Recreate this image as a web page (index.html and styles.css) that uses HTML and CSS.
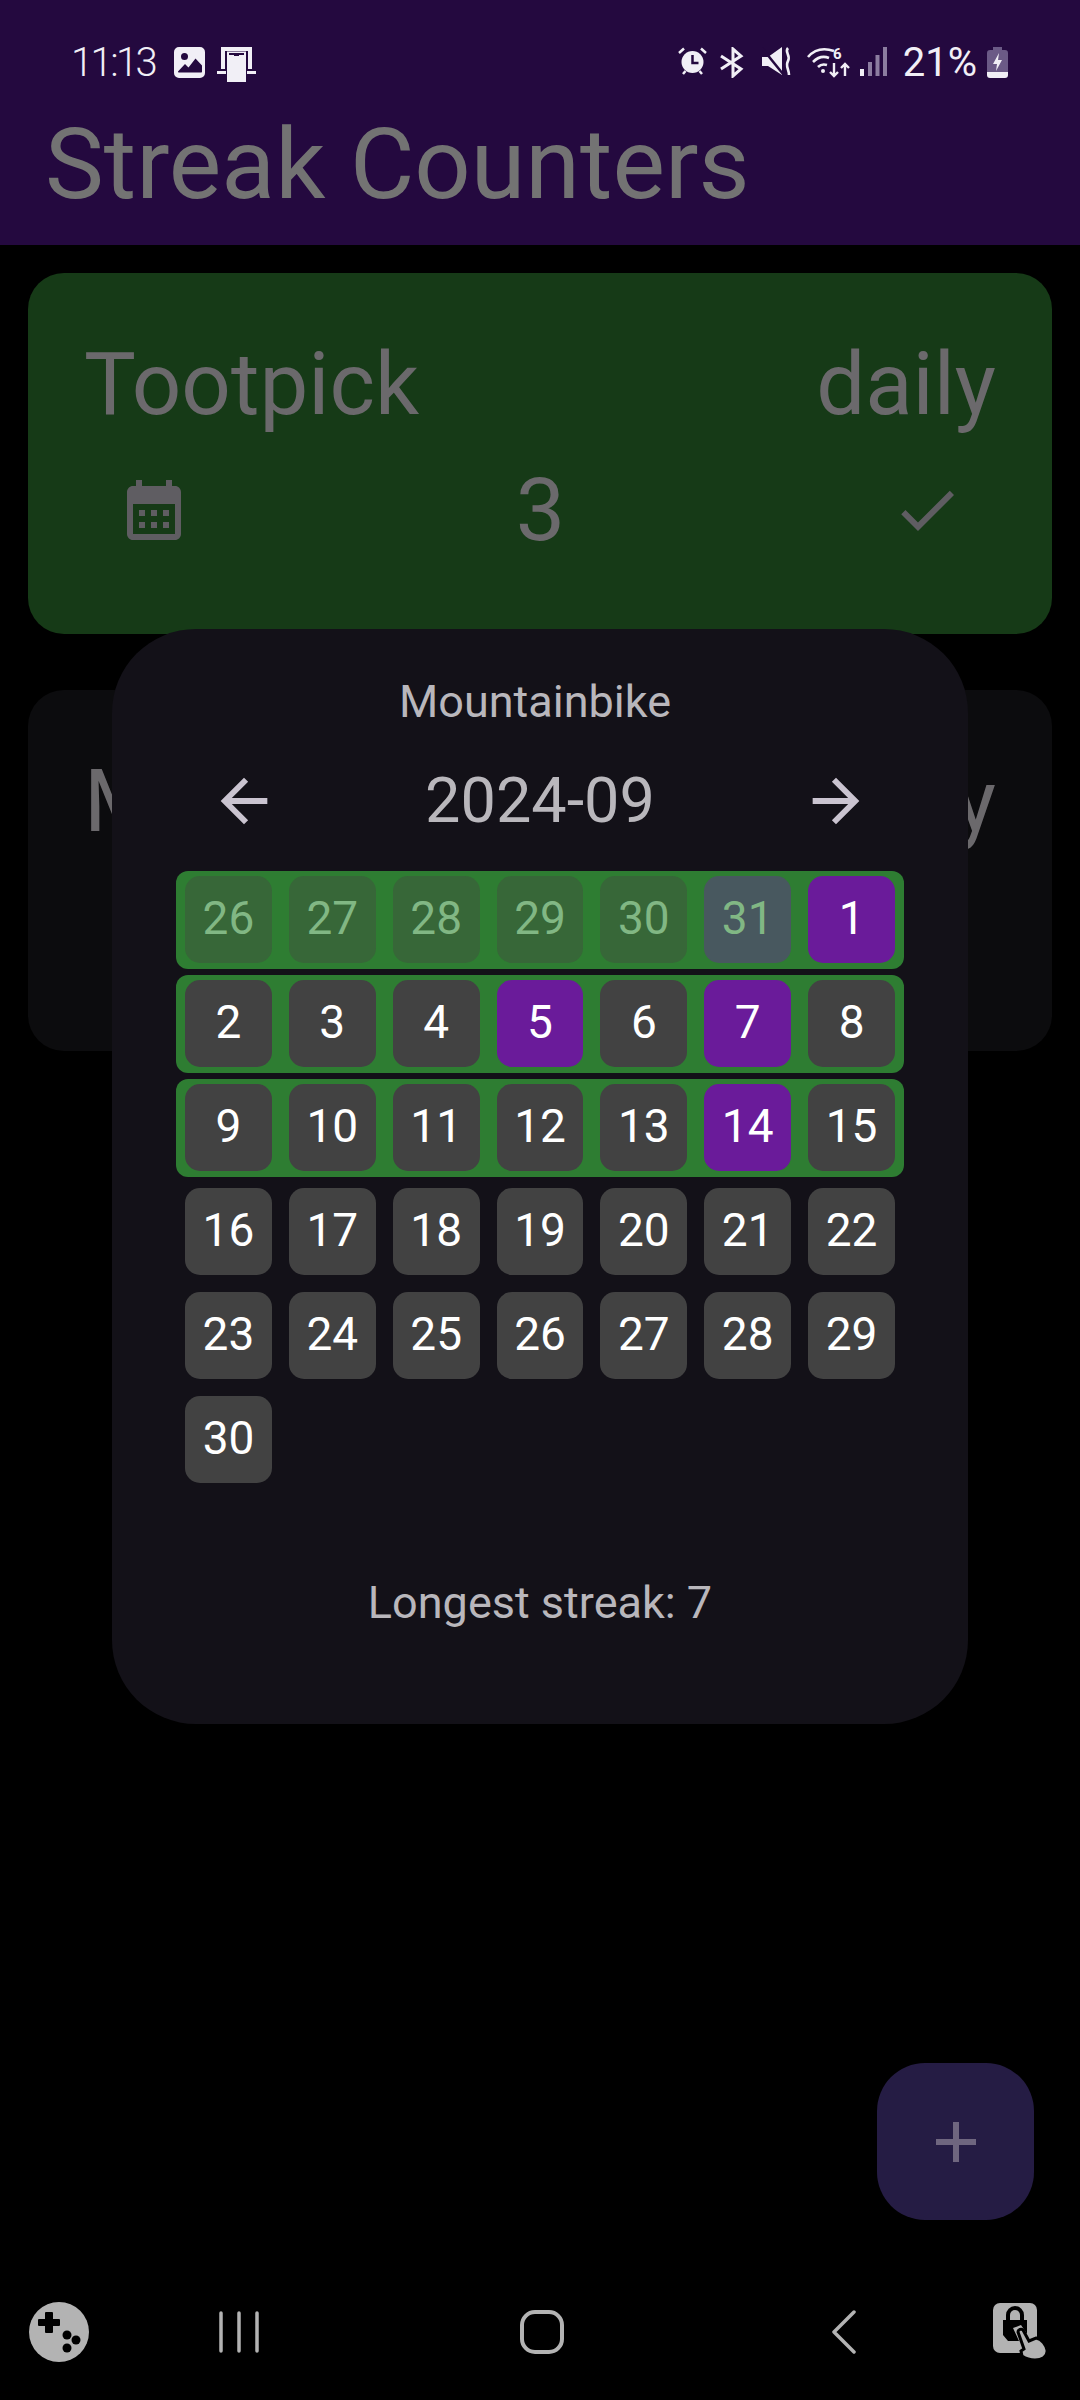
FILE: index.html
```html
<!DOCTYPE html>
<html lang="en">
<head>
    <meta charset="UTF-8">
    <meta name="viewport" content="width=device-width, initial-scale=1.0">
    <title>Streak Counters</title>
    <link rel="stylesheet" href="styles.css">
</head>
<body>
    <header class="app-header">
        <div class="status-bar">
            <div class="status-left">
                <span class="status-time">11:13</span>
                <svg class="icon-image" viewBox="0 0 31 31"><path fill="#f1eff6" fill-rule="evenodd" d="M5 0h21a5 5 0 0 1 5 5v21a5 5 0 0 1-5 5H5a5 5 0 0 1-5-5V5a5 5 0 0 1 5-5zM10.500 6a3.500 3.500 0 1 0 0 7 3.500 3.500 0 0 0 0-7zM4 25.500h23c.8 0 1-.6 1-1v-6l-6.500-7-7 9-3.500-3.500-7 7.500c0 .6.400 1 1 1z"/></svg>
                <svg class="icon-device" viewBox="0 0 39 35"><path fill="#f1eff6" d="M4 0h31v22h-4V4H8v18H4z"/><path fill="#f1eff6" d="M0 24h9v3H0zM30 24h9v3h-9z"/><path fill="#f1eff6" d="M10 4.500h19V35H10z"/><path fill="#24093f" d="M12 6h15v2H12zM17 7h5v2h-5z"/></svg>
            </div>
            <div class="status-right">
                <svg class="icon-alarm" viewBox="0 0 29 28"><circle cx="14.500" cy="15" r="11" fill="#f1eff6"/><path fill="none" stroke="#f1eff6" stroke-width="2.500" d="M1 6l5-4.500M28 6l-5-4.500M5 27l2.500-3M24 27l-2.500-3"/><path fill="none" stroke="#24093f" stroke-width="2.500" d="M14.500 8v8h6"/></svg>
                <svg class="icon-bt" viewBox="0 0 28 31"><path fill="none" stroke="#f1eff6" stroke-width="3" d="M2 9l20 13-8 7V2l8 7L2 22"/></svg>
                <svg class="icon-mute" viewBox="0 0 30 29"><path fill="#f1eff6" d="M0 10h6L20 0v28L6 19H0z"/><path fill="none" stroke="#24093f" stroke-width="2.500" d="M0 1l21 26"/><path fill="none" stroke="#f1eff6" stroke-width="2.600" d="M26 1c-4 4 3 7 0 13-3 5 1 8 1 14"/></svg>
                <svg class="icon-wifi" viewBox="0 -4 43 35"><g fill="none" stroke="#f1eff6" stroke-width="2.600"><path d="M1 10C8 2 18 1 27 4"/><path d="M6 15c5-5 11-6 16-4"/><path d="M11 20c3-3 6-3 9-2"/></g><circle cx="16" cy="24" r="2" fill="#f1eff6"/><text class="wifi-six" x="26" y="12">6</text><path fill="none" stroke="#f1eff6" stroke-width="2.400" d="M27 16v13M23 25l4 4 4-4M38 29V17M34 21l4-4 4 4"/></svg>
                <svg class="icon-signal" viewBox="0 0 27 29"><path fill="#f1eff6" d="M0 22h4v7H0z"/><path fill="#8c7da0" d="M8 15h4v14H8zM15.500 8h4v21h-4zM23 0h4v29h-4z"/></svg>
                <span class="status-battery">21%</span>
                <svg class="icon-battery" viewBox="0 0 21 31"><path fill="#6b5a86" d="M6 0h9v3h3a3 3 0 0 1 3 3v19H0V6a3 3 0 0 1 3-3h3z"/><path fill="#f1eff6" d="M0 25h21v3a3 3 0 0 1-3 3H3a3 3 0 0 1-3-3z"/><path fill="#f1eff6" d="M12 6l-6 11h4l-1 7 6-11h-4z"/></svg>
            </div>
        </div>
        <h1 class="app-title">Streak Counters</h1>
    </header>

    <main class="counter-list">
        <section class="counter-card card-done">
            <div class="card-top">
                <span>Tootpick</span>
                <span>daily</span>
            </div>
            <div class="card-bottom">
                <svg class="card-icon" viewBox="0 0 24 24"><path d="M19 4h-1V2h-2v2H8V2H6v2H5c-1.100 0-2 .9-2 2v14c0 1.100.9 2 2 2h14c1.100 0 2-.9 2-2V6c0-1.100-.9-2-2-2zm0 16H5V10h14v10zM9 14H7v-2h2v2zm4 0h-2v-2h2v2zm4 0h-2v-2h2v2zm-8 4H7v-2h2v2zm4 0h-2v-2h2v2zm4 0h-2v-2h2v2z"/></svg>
                <span class="card-count">3</span>
                <svg class="card-icon" viewBox="0 0 24 24"><path d="M9 16.170L4.830 12l-1.420 1.410L9 19 21 7l-1.410-1.410z"/></svg>
            </div>
        </section>
        <!-- second card sits behind the dialog, only its outer letters show -->
        <section class="counter-card card-open">
            <div class="card-top">
                <span>M</span>
                <span>y</span>
            </div>
        </section>
    </main>

    <div class="calendar-dialog">
        <div class="dialog-name">Mountainbike</div>
        <div class="month-row">
            <svg class="month-arrow" viewBox="0 0 24 24"><path d="M20 11H7.830l5.590-5.590L12 4l-8 8 8 8 1.410-1.410L7.830 13H20v-2z"/></svg>
            <span class="month-label">2024-09</span>
            <svg class="month-arrow" viewBox="0 0 24 24"><path d="M12 4l-1.410 1.410L16.170 11H4v2h12.170l-5.580 5.590L12 20l8-8z"/></svg>
        </div>
        <div class="weeks">
            <div class="week week-streak">
                <div class="day day-outside">26</div>
                <div class="day day-outside">27</div>
                <div class="day day-outside">28</div>
                <div class="day day-outside">29</div>
                <div class="day day-outside">30</div>
                <div class="day day-outside day-last">31</div>
                <div class="day day-done">1</div>
            </div>
            <div class="week week-streak">
                <div class="day">2</div>
                <div class="day">3</div>
                <div class="day">4</div>
                <div class="day day-done">5</div>
                <div class="day">6</div>
                <div class="day day-done">7</div>
                <div class="day">8</div>
            </div>
            <div class="week week-streak">
                <div class="day">9</div>
                <div class="day">10</div>
                <div class="day">11</div>
                <div class="day">12</div>
                <div class="day">13</div>
                <div class="day day-done">14</div>
                <div class="day">15</div>
            </div>
            <div class="week">
                <div class="day">16</div>
                <div class="day">17</div>
                <div class="day">18</div>
                <div class="day">19</div>
                <div class="day">20</div>
                <div class="day">21</div>
                <div class="day">22</div>
            </div>
            <div class="week">
                <div class="day">23</div>
                <div class="day">24</div>
                <div class="day">25</div>
                <div class="day">26</div>
                <div class="day">27</div>
                <div class="day">28</div>
                <div class="day">29</div>
            </div>
            <div class="week">
                <div class="day">30</div>
            </div>
        </div>
        <div class="longest-streak">Longest streak: 7</div>
    </div>

    <button class="add-button" aria-label="Add">
        <svg viewBox="0 0 40 40"><path fill="#6f667f" d="M17 0h6v17h17v6H23v17h-6V23H0v-6h17z"/></svg>
    </button>

    <nav class="nav-bar">
        <svg class="nav-game" viewBox="0 0 60 60"><circle cx="30" cy="30" r="30" fill="#b3b3b3"/><path fill="#000" d="M18 11h6a1 1 0 0 1 1 1v6h6a1 1 0 0 1 1 1v5a1 1 0 0 1-1 1h-6v6a1 1 0 0 1-1 1h-6a1 1 0 0 1-1-1v-6h-6a1 1 0 0 1-1-1v-5a1 1 0 0 1 1-1h6v-6a1 1 0 0 1 1-1z" transform="translate(-1 -1)"/><circle cx="38" cy="33" r="4.500"/><circle cx="47" cy="38" r="4.500"/><circle cx="38" cy="46" r="4.500"/></svg>
        <svg class="nav-recents" viewBox="0 0 40 42"><path fill="none" stroke="#b3b3b3" stroke-width="3.500" stroke-linecap="round" d="M2 2v38M20 2v38M38 2v38"/></svg>
        <svg class="nav-home" viewBox="0 0 44 44"><rect x="2" y="2" width="40" height="40" rx="13" fill="none" stroke="#b3b3b3" stroke-width="4"/></svg>
        <svg class="nav-back" viewBox="0 0 24 44"><path fill="none" stroke="#b3b3b3" stroke-width="3.500" stroke-linecap="round" stroke-linejoin="round" d="M22 2L2 22l20 20"/></svg>
        <svg class="nav-lock" viewBox="0 0 56 58"><rect width="44" height="50" rx="7" fill="#b3b3b3"/><path fill="#000" d="M13 17v-5a9 9 0 0 1 18 0v5h3v14l-6-9-8 3 6 13h-11l-5-6V17z"/><path fill="#b3b3b3" d="M17 17v-5a5 5 0 0 1 10 0v5z"/><path fill="#b3b3b3" stroke="#000" stroke-width="3" d="M25 29a3 3 0 0 1 5-2l6 11 7-3c6 1 10 7 11 12 1 7-6 10-12 10-5 0-10-2-13-4l-1-5 3-2z"/></svg>
    </nav>
</body>
</html>
```

FILE: styles.css
```css
/* Global Styles */
* {
    margin: 0;
    padding: 0;
    box-sizing: border-box;
}

body {
    width: 1080px;
    height: 2400px;
    background-color: #000;
    font-family: Roboto, sans-serif;
    display: flex;
    flex-direction: column;
    position: relative;
    overflow: hidden;
}

/* Header */
.app-header {
    height: 245px;
    background-color: #24093f;
    flex-shrink: 0;
}

.status-bar {
    height: 108px;
    padding: 40px 72px 0 71px;
    display: flex;
    justify-content: space-between;
    align-items: flex-start;
    color: #f1eff6;
}

.status-left,
.status-right {
    display: flex;
    align-items: flex-start;
}

.status-time {
    font-size: 40px;
    line-height: 46px;
    font-weight: 300;
    letter-spacing: -2.6px;
    margin-right: 19px;
}

.status-battery {
    font-size: 40px;
    line-height: 46px;
    margin: 0 10px 0 16px;
}

.status-bar svg {
    display: block;
    margin-top: 7px;
    flex-shrink: 0;
}

.icon-image { width: 31px; height: 31px; margin-right: 12px; }
.icon-device { width: 39px; height: 35px; }
.icon-alarm { width: 29px; height: 28px; margin-right: 12px; }
.icon-bt { width: 28px; height: 31px; margin-right: 15px; }
.icon-mute { width: 30px; height: 29px; margin-right: 15px; }
.status-bar .icon-wifi { width: 43px; height: 35px; margin-top: 3px; margin-right: 10px; }
.icon-signal { width: 27px; height: 29px; }
.icon-battery { width: 21px; height: 31px; }

.wifi-six {
    font-family: Roboto, sans-serif;
    font-size: 15px;
    font-weight: 700;
    fill: #f1eff6;
}

.app-title {
    font-size: 99px;
    line-height: 112px;
    font-weight: 400;
    color: #737373;
    padding-left: 45px;
}

/* Counter cards */
.counter-list {
    flex-grow: 1;
    padding: 28px;
    display: flex;
    flex-direction: column;
    gap: 56px;
}

.counter-card {
    height: 361px;
    border-radius: 36px;
    color: #6b696c;
    padding: 61px 56px 0;
}

.card-done {
    background-color: #163a17;
}

.card-open {
    background-color: #0c0c0e;
}

.card-top {
    display: flex;
    justify-content: space-between;
    font-size: 87px;
    line-height: 100px;
}

.card-bottom {
    margin: 24px 33px 0 34px;
    display: flex;
    justify-content: space-between;
    align-items: center;
}

.card-count {
    font-size: 88px;
    line-height: 104px;
}

.card-icon {
    width: 72px;
    height: 72px;
    fill: #5f5d62;
}

/* Calendar dialog */
.calendar-dialog {
    position: absolute;
    top: 629px;
    left: 112px;
    width: 856px;
    height: 1095px;
    background-color: #131118;
    border-radius: 84px;
    padding: 47px 64px 0;
    text-align: center;
    color: #b9b7bc;
}

.dialog-name {
    font-size: 45px;
    line-height: 52px;
    padding-right: 10px;
}

.month-row {
    display: flex;
    justify-content: space-between;
    align-items: center;
    margin-top: 33px;
    padding: 0 33px;
    height: 80px;
}

.month-label {
    font-size: 63px;
    line-height: 80px;
}

.month-arrow {
    width: 70px;
    height: 70px;
    fill: #cac4d0;
}

.weeks {
    margin-top: 30px;
    display: flex;
    flex-direction: column;
    gap: 6px;
}

.week {
    height: 98px;
    padding: 5px 9px;
    display: flex;
    gap: 17px;
    border-radius: 12px;
}

.week-streak {
    background-color: #2e7d32;
}

.day {
    width: 87px;
    height: 87px;
    border-radius: 15px;
    background-color: #424242;
    color: #fff;
    font-size: 46px;
    line-height: 85px;
    text-align: center;
}

.day-done {
    background-color: #6a1b9a;
}

.day-outside {
    background-color: #376738;
    color: #81b784;
}

.day-last {
    background-color: #48585f;
}

.longest-streak {
    margin-top: 86px;
    font-size: 45px;
    line-height: 56px;
}

/* Floating add button */
.add-button {
    position: absolute;
    left: 877px;
    top: 2063px;
    width: 157px;
    height: 157px;
    border: none;
    border-radius: 48px;
    background-color: #251c44;
    display: flex;
    align-items: center;
    justify-content: center;
}

.add-button svg {
    width: 40px;
    height: 40px;
}

/* Navigation bar */
.nav-bar {
    height: 144px;
    flex-shrink: 0;
    padding: 8px 0 0 29px;
    display: flex;
    align-items: center;
}

.nav-game { width: 60px; height: 60px; }
.nav-recents { width: 40px; height: 42px; margin-left: 130px; }
.nav-home { width: 44px; height: 44px; margin-left: 261px; }
.nav-back { width: 24px; height: 44px; margin-left: 268px; }
.nav-lock { width: 56px; height: 58px; margin-left: 137px; }
```
